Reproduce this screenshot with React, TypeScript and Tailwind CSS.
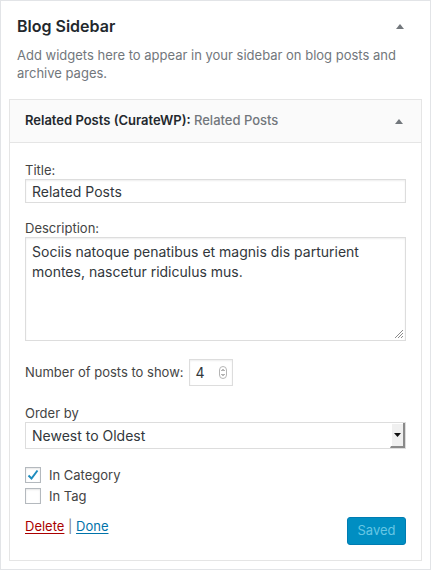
export default function App() {
  return (
    <div className="w-[431px] h-[571px] bg-white font-['Inter',sans-serif] text-[#23282d]">
      <div className="h-[570px] border border-[#e2e4e7] px-2 pt-[15px]">
        {/* Sidebar header */}
        <div className="flex items-center justify-between pl-2 pr-[18px]">
          <h2 className="text-[16px] leading-5 font-semibold">Blog Sidebar</h2>
          <Caret />
        </div>
        <p className="mt-[10px] pl-2 pr-2 text-[13px] leading-[18px] text-[#72777c]">
          Add widgets here to appear in your sidebar on blog posts and archive pages.
        </p>

        {/* Widget */}
        <div className="mt-[17px] border border-[#e5e5e5] bg-white">
          <div className="h-[43px] flex items-center justify-between px-[15px] pr-[18px] bg-[#fafafa] border-b border-[#e5e5e5]">
            <h3 className="text-[13px] font-semibold">
              Related Posts (CurateWP):{' '}
              <span className="font-medium text-[#72777c]">Related Posts</span>
            </h3>
            <Caret />
          </div>

          <div className="px-[15px] pt-[18px] pb-[15px] text-[13px] text-[#444]">
            <label className="block leading-[18px]">Title:</label>
            <div className="h-[24px] flex items-center border border-[#ddd] px-[6px] text-[14px] text-[#32373c] shadow-[inset_0_1px_2px_rgba(0,0,0,0.07)]">
              Related Posts
            </div>

            <label className="block mt-[16px] leading-[18px]">Description:</label>
            <div className="relative h-[104px] border border-[#ddd] px-[6px] pt-[4px] text-[14px] leading-5 text-[#32373c] shadow-[inset_0_1px_2px_rgba(0,0,0,0.07)]">
              Sociis natoque penatibus et magnis dis parturient montes, nascetur ridiculus mus.
              <svg className="absolute right-[1px] bottom-[1px]" width="11" height="11" viewBox="0 0 11 11">
                <path d="M10 2L2 10M10 5L5 10M10 8L8 10" stroke="#8c8c8c" strokeWidth="1" />
                <path d="M10 3L3 10M10 6L6 10M10 9L9 10" stroke="#fff" strokeWidth="1" />
              </svg>
            </div>

            <div className="mt-[18px] flex items-center">
              <span>Number of posts to show:</span>
              <div className="ml-[5px] w-[44px] h-[27px] flex items-center justify-between border border-[#ddd] pl-[6px] pr-[5px] text-[14px] text-[#32373c] shadow-[inset_0_1px_2px_rgba(0,0,0,0.07)]">
                <span>4</span>
                <svg width="8" height="13" viewBox="0 0 8 13">
                  <rect x="0.5" y="0.5" width="7" height="12" rx="3.5" fill="#fff" stroke="#b5b5b5" />
                  <path d="M2.5 5L4 3.5L5.5 5M2.5 8L4 9.5L5.5 8" fill="none" stroke="#555" strokeWidth="0.9" />
                </svg>
              </div>
            </div>

            <label className="block mt-[18px] leading-[18px]">Order by</label>
            <div className="h-[27px] flex items-stretch border border-[#ddd] text-[14px] text-[#32373c]">
              <span className="flex-1 flex items-center px-[6px]">Newest to Oldest</span>
              <span className="w-[15px] flex items-center justify-center bg-[#f0f0f0] border-l border-[#fff] border-r-2 border-b-2 border-r-[#8a8a8a] border-b-[#8a8a8a] shadow-[inset_1px_1px_0_#fff]">
                <svg width="7" height="4" viewBox="0 0 7 4">
                  <path d="M0 0H7L3.5 4Z" fill="#111" />
                </svg>
              </span>
            </div>

            <div className="mt-[18px] flex flex-col gap-[5px]">
              <div className="flex items-center gap-2">
                <span className="w-4 h-4 border border-[#b4b9be] shadow-[inset_0_1px_2px_rgba(0,0,0,0.1)] flex items-center justify-center">
                  <svg width="14" height="14" viewBox="0 0 14 14">
                    <path d="M2.5 7.5L5.5 10.5L11.5 2.5" fill="none" stroke="#1e8cbe" strokeWidth="2" />
                  </svg>
                </span>
                <span className="leading-4">In Category</span>
              </div>
              <div className="flex items-center gap-2">
                <span className="w-4 h-4 border border-[#b4b9be] shadow-[inset_0_1px_2px_rgba(0,0,0,0.1)]" />
                <span className="leading-4">In Tag</span>
              </div>
            </div>

            <div className="mt-[13px] flex items-start justify-between">
              <div className="leading-[18px]">
                <a className="text-[#a00] underline underline-offset-2">Delete</a>
                <span className="text-[#72777c]"> | </span>
                <a className="text-[#0073aa] underline underline-offset-2">Done</a>
              </div>
              <button className="w-[59px] h-[28px] rounded-[3px] bg-[#008ec2] border border-[#007cb2] text-[#66c6e4] text-[13px]">
                Saved
              </button>
            </div>
          </div>
        </div>
      </div>
    </div>
  )
}

function Caret() {
  return (
    <svg width="8" height="5" viewBox="0 0 8 5">
      <path d="M0 5L4 0L8 5Z" fill="#72777c" />
    </svg>
  )
}
